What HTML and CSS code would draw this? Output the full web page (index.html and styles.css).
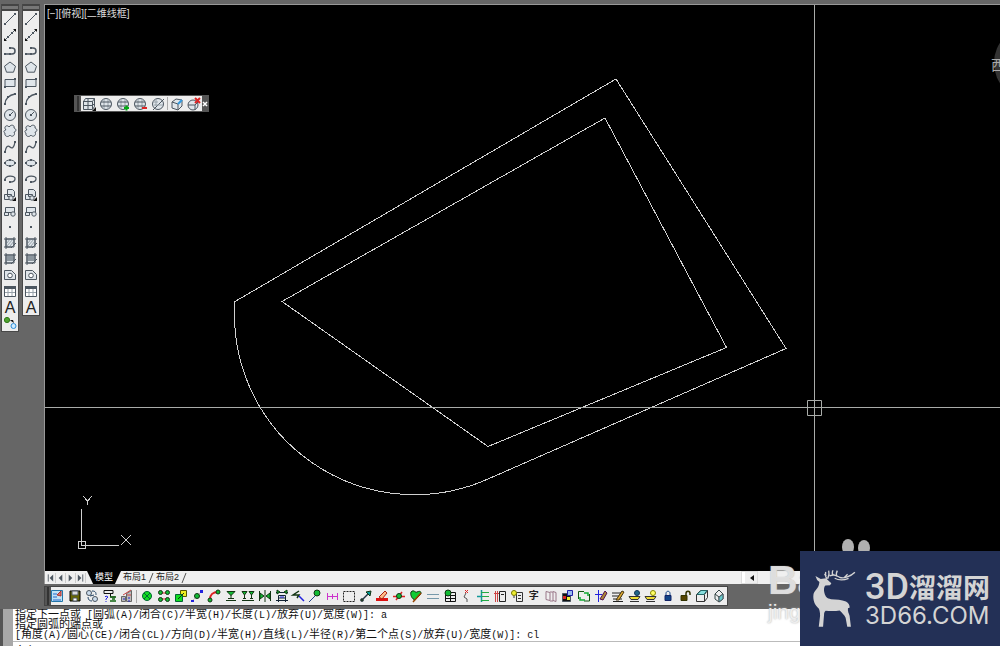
FILE: index.html
```html
<!DOCTYPE html>
<html lang="zh-CN">
<head>
<meta charset="utf-8">
<title>CAD</title>
<link rel="stylesheet" href="styles.css">
</head>
<body>
<svg class="defs" aria-hidden="true">
  <symbol id="i-line" viewBox="0 0 16 16"><path d="M3 13 13 3"/><path class="dot" d="M2 12h2v2H2zM12 2h2v2h-2z"/></symbol>
  <symbol id="i-xline" viewBox="0 0 16 16"><path d="M3 13 13 3"/><path class="dk" d="M2 14v-3l3 3zM14 2v3l-3-3z"/><path class="dot" d="M5 9h2v2H5zM9 5h2v2H9z"/></symbol>
  <symbol id="i-pline" viewBox="0 0 16 16"><path d="M3 11h5M8 5h2c4 0 4 6 0 6H8" stroke-width="1.500"/><path class="dot" d="M2 10h2v2H2zM7 10h2v2H7zM7 4h2v2H7z"/></symbol>
  <symbol id="i-polygon" viewBox="0 0 16 16"><path class="lt" d="M8 3l5.500 4.200-2 6h-7l-2-6z"/></symbol>
  <symbol id="i-rect" viewBox="0 0 16 16"><path class="lt" d="M3 4.500h10v7H3z"/><path class="dot" d="M2 11h2v2H2zM12 3h2v2h-2z"/></symbol>
  <symbol id="i-arc" viewBox="0 0 16 16"><path d="M3 13c0-5 4-9 10-10" stroke-width="1.300"/><path class="dot" d="M2 12h2v2H2zM5 5h2v2H5zM12 2h2v2h-2z"/></symbol>
  <symbol id="i-circle" viewBox="0 0 16 16"><circle class="lt" cx="8" cy="8" r="5.500"/><path d="M8 8l3-3"/><path class="dot" d="M7 7h2v2H7z"/></symbol>
  <symbol id="i-cloud" viewBox="0 0 16 16"><path class="lt" d="M4 7C1 4 5 1 7 4c2-3 6-2 5 1 3 1 2 4 0 4 2 3-2 6-4 3-2 3-6 1-5-2-2-1-1-3 1-3z"/></symbol>
  <symbol id="i-spline" viewBox="0 0 16 16"><path d="M3 13c1-6 3-7 5-5s4 1 5-5" stroke-width="1.300"/><path class="dot" d="M2 12h2v2H2zM12 2h2v2h-2z"/></symbol>
  <symbol id="i-ellipse" viewBox="0 0 16 16"><ellipse class="lt" cx="8" cy="8" rx="5" ry="3"/><path class="dot" d="M2 7h2v2H2zM12 7h2v2h-2zM7 4h2v2H7zM7 10h2v2H7z"/></symbol>
  <symbol id="i-earc" viewBox="0 0 16 16"><path d="M3 9c-1-5 11-5 10-1 0 2-2 3-5 3" stroke-width="1.300"/><path class="dot" d="M2 8h2v2H2zM7 10h2v2H7z"/></symbol>
  <symbol id="i-insert" viewBox="0 0 16 16"><path class="lt" d="M5.500 2.500h5l2 2v5h-7zM2.500 7.500h7v5h-7z"/><circle class="lt" cx="9" cy="11" r="2.200"/><path class="dk" d="M14 10v4h-4z"/></symbol>
  <symbol id="i-block" viewBox="0 0 16 16"><path class="lt" d="M3.500 4.500h9v5h-9zM2.500 9.500h4v3h-4z"/><circle class="lt" cx="11" cy="11" r="2.200"/></symbol>
  <symbol id="i-point" viewBox="0 0 16 16"><path class="dot" d="M7 7h2v2H7z"/></symbol>
  <symbol id="i-hatch" viewBox="0 0 16 16"><path class="lt" d="M4 4h8v8H4z"/><path class="thin" d="M5 8l3-4M5 11l6-7M8 11l4-5"/><path d="M4 2v12M2 4h12M12 2v8M2 12h8M9 13l5-5"/></symbol>
  <symbol id="i-grad" viewBox="0 0 16 16"><path class="lt" d="M4 4h8v8H4z"/><path class="md" stroke="none" d="M5 5h7v5H5z"/><path d="M4 2v12M2 4h12M12 2v8M2 12h8M9 13l5-5"/></symbol>
  <symbol id="i-region" viewBox="0 0 16 16"><path class="lt" d="M2.500 3.500h7l4 4v5h-11z"/><circle class="wh" cx="8" cy="8.500" r="2.300"/></symbol>
  <symbol id="i-table" viewBox="0 0 16 16"><path class="wh" d="M2.500 3.500h11v10h-11z"/><path class="dot" d="M2 3h12v3H2z"/><path class="thin" d="M6 6v7M10 6v7M3 9.500h10"/></symbol>
  <symbol id="i-add" viewBox="0 0 16 16"><circle cx="5" cy="5" r="2.600" fill="#4fa32f" stroke="#2f7a1a"/><path class="dk" d="M8 5h3l1 3-3-2z"/><circle cx="11.500" cy="11" r="2.500" fill="#cfeaff" stroke="#2b8fd8"/></symbol>
</svg>

<main class="app">
  <aside class="docks">
    <div class="palette" role="toolbar" aria-label="绘图">
      <span class="grip"></span>
      <button aria-label="直线"><svg><use href="#i-line"/></svg></button>
      <button aria-label="构造线"><svg><use href="#i-xline"/></svg></button>
      <button aria-label="多段线"><svg><use href="#i-pline"/></svg></button>
      <button aria-label="多边形"><svg><use href="#i-polygon"/></svg></button>
      <button aria-label="矩形"><svg><use href="#i-rect"/></svg></button>
      <button aria-label="圆弧"><svg><use href="#i-arc"/></svg></button>
      <button aria-label="圆"><svg><use href="#i-circle"/></svg></button>
      <button aria-label="修订云线"><svg><use href="#i-cloud"/></svg></button>
      <button aria-label="样条曲线"><svg><use href="#i-spline"/></svg></button>
      <button aria-label="椭圆"><svg><use href="#i-ellipse"/></svg></button>
      <button aria-label="椭圆弧"><svg><use href="#i-earc"/></svg></button>
      <button aria-label="插入块"><svg><use href="#i-insert"/></svg></button>
      <button aria-label="创建块"><svg><use href="#i-block"/></svg></button>
      <button aria-label="点"><svg><use href="#i-point"/></svg></button>
      <button aria-label="图案填充"><svg><use href="#i-hatch"/></svg></button>
      <button aria-label="渐变色"><svg><use href="#i-grad"/></svg></button>
      <button aria-label="面域"><svg><use href="#i-region"/></svg></button>
      <button aria-label="表格"><svg><use href="#i-table"/></svg></button>
      <button class="letter">A</button>
      <button aria-label="添加选定对象"><svg><use href="#i-add"/></svg></button>
    </div>
    <div class="palette" role="toolbar" aria-label="绘图 2">
      <span class="grip"></span>
      <button aria-label="直线"><svg><use href="#i-line"/></svg></button>
      <button aria-label="构造线"><svg><use href="#i-xline"/></svg></button>
      <button aria-label="多段线"><svg><use href="#i-pline"/></svg></button>
      <button aria-label="多边形"><svg><use href="#i-polygon"/></svg></button>
      <button aria-label="矩形"><svg><use href="#i-rect"/></svg></button>
      <button aria-label="圆弧"><svg><use href="#i-arc"/></svg></button>
      <button aria-label="圆"><svg><use href="#i-circle"/></svg></button>
      <button aria-label="修订云线"><svg><use href="#i-cloud"/></svg></button>
      <button aria-label="样条曲线"><svg><use href="#i-spline"/></svg></button>
      <button aria-label="椭圆"><svg><use href="#i-ellipse"/></svg></button>
      <button aria-label="椭圆弧"><svg><use href="#i-earc"/></svg></button>
      <button aria-label="插入块"><svg><use href="#i-insert"/></svg></button>
      <button aria-label="创建块"><svg><use href="#i-block"/></svg></button>
      <button aria-label="点"><svg><use href="#i-point"/></svg></button>
      <button aria-label="图案填充"><svg><use href="#i-hatch"/></svg></button>
      <button aria-label="渐变色"><svg><use href="#i-grad"/></svg></button>
      <button aria-label="面域"><svg><use href="#i-region"/></svg></button>
      <button aria-label="表格"><svg><use href="#i-table"/></svg></button>
      <button class="letter">A</button>
    </div>
  </aside>

  <section class="work">
    <div class="canvas">
      <svg class="drawing" viewBox="45 5 955 566" preserveAspectRatio="xMinYMin slice" aria-hidden="true">
        <g class="shape">
          <path d="M235 301.500 616 79 786 348.500 488 479A180 180 0 0 1 235 301.500z"/>
          <path d="M282 301.500 605 118 726.500 347.500 488 446.500z"/>
        </g>
        <g class="ucs">
          <path d="M81.500 509v36h37M78.500 541.500h7v7h-7z"/>
          <path d="M83 496l4.500 5 4.500-5M87.500 501v4M121 535l10 10M131 535l-10 10"/>
        </g>
        <path class="cross" d="M814.500 5v566M45 407.500h955"/>
        <path class="cross" d="M807.500 400.500h14v15h-14z"/>
        <circle cx="1031" cy="63" r="37" fill="#333" stroke="none"/>
      </svg>
      <span class="view-label">[−][俯视][二维线框]</span>
      <span class="compass">西</span>

      <div class="floatbar" role="toolbar" aria-label="视觉样式">
        <span class="vgrip"></span>
        <div class="float-icons">
          <button aria-label="二维线框"><svg viewBox="0 0 16 16"><path class="lt" d="M2.500 5.500l2-3h9v8l-2 3h-9z"/><path d="M2 5.500h9.500V13M11.500 5.500l2-3M7 3v10M2 9.500h9l3-2"/><path class="dk" d="M15 11v4h-4z"/></svg></button>
          <button aria-label="三维隐藏"><svg viewBox="0 0 16 16"><circle class="lt" cx="8" cy="8" r="5.500"/><path class="thin" d="M6 3v10M10 3v10"/><path d="M3 6h10M3 10h10"/></svg></button>
          <button aria-label="三维线框"><svg viewBox="0 0 16 16"><circle class="lt" cx="8" cy="8" r="5.500"/><path class="thin" d="M6 3v10M10 3v10"/><path d="M3 6h10M3 10h10"/><path d="M9 12h5M11.500 9.500v5" stroke="#0a1" stroke-width="2"/></svg></button>
          <button aria-label="概念"><svg viewBox="0 0 16 16"><circle class="lt" cx="8" cy="8" r="5.500"/><path class="thin" d="M6 3v10M10 3v10"/><path d="M3 6h10M3 10h10"/><path d="M10 12h5" stroke="#d22" stroke-width="2"/></svg></button>
          <button aria-label="真实"><svg viewBox="0 0 16 16"><circle class="lt" cx="8" cy="8" r="5.500"/><path d="M3 14 14 3"/><path class="thin" d="M6 3v7M4 9h9M3 6h5"/></svg></button>
          <span class="sep"></span>
          <button aria-label="编辑"><svg viewBox="0 0 16 16"><path class="lt" d="M3 6l4-3 6 1v6l-4 4-6-2z"/><path d="M3 6l6 2v6"/><path d="M9 8l4-4" stroke="#39d" stroke-width="2"/></svg></button>
          <button aria-label="删除"><svg viewBox="0 0 16 16"><circle class="lt" cx="7" cy="9" r="5"/><path d="M2 9h7v5M9 9l3-3"/><path d="M9 2l5 5M14 2l-5 5" stroke="#d22" stroke-width="2"/></svg></button>
        </div>
        <button class="close" aria-label="关闭"><svg viewBox="0 0 6 6"><path d="M1 1l4 4M5 1l-4 4" stroke="#fff" stroke-width="1.500"/></svg></button>
      </div>
    </div>

    <nav class="tabs" aria-label="布局">
      <button class="step" aria-label="第一个"><svg viewBox="0 0 10 10"><path d="M2.500 1v8"/><path class="dot" d="M8 1v8L4 5z"/></svg></button>
      <button class="step" aria-label="上一个"><svg viewBox="0 0 10 10"><path class="dot" d="M7 1v8L3 5z"/></svg></button>
      <button class="step" aria-label="下一个"><svg viewBox="0 0 10 10"><path class="dot" d="M3 1v8l4-4z"/></svg></button>
      <button class="step" aria-label="最后一个"><svg viewBox="0 0 10 10"><path d="M7.500 1v8"/><path class="dot" d="M2 1v8l4-4z"/></svg></button>
      <button class="tab active">模型</button>
      <button class="tab">布局1</button>
      <svg class="slash" viewBox="0 0 6 12"><path d="M1 11 5 1"/></svg>
      <button class="tab">布局2</button>
      <svg class="slash" viewBox="0 0 6 12"><path d="M1 11 5 1"/></svg>
      <button class="scroll" aria-label="向左滚动"><svg viewBox="0 0 10 10"><path class="dk" d="M7 2v6L3 5z"/></svg></button>
    </nav>

    <div class="strip">
      <div class="bar" role="toolbar" aria-label="工具">
        <span class="vgrip"></span>
        <div class="group first">
          <button aria-label="图像"><svg viewBox="0 0 16 16"><path d="M2.500 2.500h11v11h-11z" fill="#bfe3f5" stroke="#27a"/><path d="M4 6h4M4 9h4M4 12h8" stroke="#26c"/><path d="M8 7l4-4v5z" fill="#d76" stroke="#a33"/></svg></button>
          <button aria-label="保存"><svg viewBox="0 0 16 16"><path d="M3 3h10v10H3z" fill="#660" stroke="#000"/><path d="M5 3h6v4H5z" fill="#ddd"/><path d="M6 10h4v3H6z" fill="#fff"/></svg></button>
          <button aria-label="链接"><svg viewBox="0 0 16 16"><circle cx="5" cy="5" r="2.500" fill="#cde"/><circle cx="11" cy="11" r="2.500" fill="#cde"/><path d="M8 3c4 0 4 2 4 4M4 9c0 3 2 4 4 4M6 8l4-1" stroke="#246"/></svg></button>
          <button aria-label="查询"><svg viewBox="0 0 16 16"><path d="M2 2.500h9v3H2zM8.500 6v3h5" stroke="#111"/><path d="M3 9l1-1 2 1-2 2v1M4 13v1" stroke="#22d"/><path d="M8 9h6M8 13h6M10 11h3" stroke="#161" stroke-width="1.500"/></svg></button>
          <button aria-label="楼层"><svg viewBox="0 0 16 16"><path d="M2.500 8.500h4v5h-4zM7.500 5.500l5-3v11h-5z" fill="#bbb" stroke="#666"/><path d="M4 7l8-5M8 7h4" stroke="#c44"/><path d="M4 11h2M9 10h2M9 13h2" stroke="#22c"/></svg></button>
        </div>
        <span class="sep"></span>
        <div class="group">
          <button aria-label="节点"><svg viewBox="0 0 16 16"><circle cx="8" cy="8" r="4.500" fill="#1d2" stroke="#063"/><path d="M5 5l6 6M11 5l-6 6" stroke="#063"/></svg></button>
          <button aria-label="阵列"><svg viewBox="0 0 16 16"><path d="M5 5h6M5 11h6" stroke="#d22"/><g fill="#1b3" stroke="#131"><circle cx="4.500" cy="4.500" r="2"/><circle cx="11.500" cy="4.500" r="2"/><circle cx="4.500" cy="11.500" r="2"/><circle cx="11.500" cy="11.500" r="2"/></g></svg></button>
          <button aria-label="缩放"><svg viewBox="0 0 16 16"><path d="M7.500 2.500h6v6h-6z" fill="#ee2" stroke="#550"/><path d="M2.500 6.500h7v7h-7z" fill="#1d2" stroke="#063"/><path d="M5 11l6-6" stroke="#131"/></svg></button>
          <button aria-label="连接点"><svg viewBox="0 0 16 16"><path d="M3 13 13 3" stroke="#bbb"/><circle cx="8" cy="8" r="2.500" fill="#1b3" stroke="#131"/><path d="M2 12h3v2H2zM11 2h3v3h-3z" fill="#22d" stroke="none"/></svg></button>
          <button aria-label="弧线"><svg viewBox="0 0 16 16"><path d="M4 11c0-4 3-7 8-7" stroke="#d22" stroke-width="2"/><circle cx="4" cy="12" r="2" fill="#1b3" stroke="#131"/><circle cx="12" cy="4" r="2" fill="#1b3" stroke="#131"/></svg></button>
          <button aria-label="下对齐"><svg viewBox="0 0 16 16"><path d="M4 3.500h8l-4 4z" fill="#1b3" stroke="#131"/><path d="M8 7v4M3 12.500h10M5 10.500h6" stroke="#131"/></svg></button>
          <button aria-label="双对齐"><svg viewBox="0 0 16 16"><path d="M2 3.500h5L4.500 7zM9 3.500h5L11.500 7z" fill="#1b3" stroke="#131"/><path d="M4.500 7v4M11.500 7v4M3 10.500h3M10 10.500h3M2 12.500h12" stroke="#131"/></svg></button>
          <button aria-label="镜像"><svg viewBox="0 0 16 16"><path d="M8 2v12M2.500 3v10M13.500 3v10" stroke="#131"/><path d="M3 5l4 3-4 3zM13 5l-4 3 4 3z" fill="#1b3" stroke="#131"/></svg></button>
          <button aria-label="标高"><svg viewBox="0 0 16 16"><path d="M2 4.500h12M2 12.500h12M4.500 14V7.500h7V14M4 10h8" stroke="#123"/><path d="M3 2l3 2-3 2zM13 2l-3 2 3 2z" fill="#1b3" stroke="#131"/><path d="M6 9h4" stroke="#22d"/></svg></button>
          <button aria-label="折线"><svg viewBox="0 0 16 16"><path d="M9 3 3 7h6l-2 3" stroke="#131" stroke-width="1.500"/><path d="M9 8l5 5" stroke="#22d" stroke-width="1.500"/></svg></button>
          <button aria-label="标记"><svg viewBox="0 0 16 16"><path d="M2 14l7-7" stroke="#248"/><circle cx="10" cy="5" r="3" fill="#1b3" stroke="#131"/></svg></button>
          <button aria-label="间距"><svg viewBox="0 0 16 16"><path d="M3 8.500h10M3.500 5v7M8.500 6v5M13.500 5v7" stroke="#c3c"/></svg></button>
          <button aria-label="选框"><svg viewBox="0 0 16 16"><path d="M2.500 3.500h11v10h-11z" stroke="#222" stroke-dasharray="2 1"/></svg></button>
          <button aria-label="引线"><svg viewBox="0 0 16 16"><path d="M4 12l7-7" stroke="#234" stroke-width="1.500"/><path d="M8 4l5-1-1 5z" fill="#099" stroke="#131"/><circle cx="4" cy="12" r="1.500" fill="#131"/></svg></button>
          <button aria-label="涂改"><svg viewBox="0 0 16 16"><path d="M2 13h12v-3H2z" fill="#d11" stroke="none"/><path d="M5 9l6-6 2 2-5 6z" fill="#fb8" stroke="#a21"/></svg></button>
          <button aria-label="打断"><svg viewBox="0 0 16 16"><path d="M2 8.500h12M5 12l6-8" stroke="#d22" stroke-width="1.500"/><circle cx="8" cy="8" r="2.500" fill="#1b3" stroke="#131"/></svg></button>
          <button aria-label="画笔"><svg viewBox="0 0 16 16"><path d="M3 4c3-3 4 1 6 0 4-2 5 1 3 3l-5 5c-3-1-5-5-4-8z" fill="#1c3" stroke="#131"/><path d="M5 14l8-9" stroke="#940" stroke-width="1.500"/></svg></button>
          <button aria-label="平行线"><svg viewBox="0 0 16 16"><path d="M2 6.500h12M2 10.500h12" stroke="#79a"/></svg></button>
          <button aria-label="表单"><svg viewBox="0 0 16 16"><path d="M3.500 4.500h10v9h-10zM4 7.500h9M4 10.500h9M8.500 5v8" fill="#eee" stroke="#111"/><circle cx="6" cy="5" r="3" fill="#1b3" stroke="#131"/></svg></button>
          <button aria-label="折断"><svg viewBox="0 0 16 16"><path d="M9 14v-3L6 9l2-4" stroke="#555"/><path d="M7 2l3 3M10 2 7 5" stroke="#d22"/></svg></button>
          <button aria-label="分支"><svg viewBox="0 0 16 16"><path d="M6.500 2v12M2 8.500h5" stroke="#199" stroke-width="1.500"/><path d="M6 4.500h8M7 8.500h7M6 12.500h8" stroke="#2a4"/></svg></button>
          <button aria-label="门窗"><svg viewBox="0 0 16 16"><path d="M3.500 3v11M5.500 3v11M2 5.500h5" stroke="#c44"/><path d="M7.500 3.500h6v10h-6zM9 6.500h3" stroke="#222"/></svg></button>
          <button aria-label="灯组"><svg viewBox="0 0 16 16"><path d="M7.500 4.500h6v9h-6zM9 7.500h3M9 10.500h3" stroke="#333"/><circle cx="5" cy="5" r="2.500" fill="#ee3" stroke="#770"/><path d="M4 9h2" stroke="#333"/></svg></button>
          <button class="word">字</button>
          <button aria-label="图册"><svg viewBox="0 0 16 16"><path d="M3 3.500l4 1v8l-4-1zM7 4h3v9H7M10 3.500l3 1v9l-3-1" fill="#eee" stroke="#978"/></svg></button>
          <button aria-label="颜色"><svg viewBox="0 0 16 16"><path d="M3.500 5.500h8v8h-8z" fill="#111"/><path d="M8.500 2.500h5v5h-5z" fill="#9be" stroke="#22a"/><path d="M4 8h3v3H4z" fill="#d22" stroke="none"/><path d="M8 9h3v3H8z" fill="#ee3" stroke="none"/></svg></button>
          <button aria-label="替换"><svg viewBox="0 0 16 16"><path d="M2.500 11V3.500H8M13.500 6v7H8" stroke="#151"/><path d="M8 5h4v3M4 9v3h5" stroke="#1a3" stroke-width="1.500"/></svg></button>
          <button aria-label="刷子"><svg viewBox="0 0 16 16"><path d="M5.500 2v12M2 6.500h7" stroke="#22d"/><path d="M7 11l5-8 2 2-4 7z" fill="#a83" stroke="#515"/></svg></button>
          <button aria-label="编辑图层"><svg viewBox="0 0 16 16"><path d="M2 5h9M2 8h10M3 11h9M3 13.500h10" stroke="#222"/><path d="M6 12l6-9 2 1-5 8z" fill="#da3" stroke="#431"/></svg></button>
          <button aria-label="冻结图层"><svg viewBox="0 0 16 16"><path d="M2 8.500h11l-2 3H4zM3 13.500h9" fill="#ed3" stroke="#333"/><circle cx="10" cy="5" r="2.500" fill="#268" stroke="#135"/></svg></button>
          <button aria-label="打开图层"><svg viewBox="0 0 16 16"><path d="M2 8.500h11l-2 3H4zM3 13.500h9" fill="#ed3" stroke="#333"/><circle cx="10" cy="5" r="2.500" fill="#ff6" stroke="#880"/></svg></button>
          <button aria-label="锁定"><svg viewBox="0 0 16 16"><path d="M6 8V5.500c0-3 4-3 4 0V8" stroke="#148"/><path d="M5 7.500h6v5H5z" fill="#148" stroke="#126"/></svg></button>
          <button aria-label="解锁"><svg viewBox="0 0 16 16"><path d="M9 8V5.500c0-3 4-3 4 0V7" stroke="#330" stroke-width="1.500"/><path d="M4 7.500h6v5H4z" fill="#540" stroke="#330"/></svg></button>
          <button aria-label="立方体"><svg viewBox="0 0 16 16"><path d="M2.500 6.500l4-4h7l-3 4v7h-8zM10.500 13.500l3-4v-7" fill="#eee" stroke="#333"/><path d="M3 6.500l4-4h6l-3 4z" fill="#8dd" stroke="#266"/></svg></button>
          <button aria-label="等轴测"><svg viewBox="0 0 16 16"><path d="M8 2l4 4v5l-4 3-4-3V6zM4 6l4 3 4-3M8 9v5" fill="#eee" stroke="#344"/><path d="M8 9l4-3v5l-4 3z" fill="#6cc"/></svg></button>
        </div>
      </div>
    </div>
  </section>

  <footer class="command">
    <span class="cmd-grip"></span>
    <div class="cmd-body">
      <p><b>指定下一点或</b> [<b>圆弧</b>(A)/<b>闭合</b>(C)/<b>半宽</b>(H)/<b>长度</b>(L)/<b>放弃</b>(U)/<b>宽度</b>(W)]: a</p>
      <p><b>指定圆弧的端点或</b></p>
      <p>[<b>角度</b>(A)/<b>圆心</b>(CE)/<b>闭合</b>(CL)/<b>方向</b>(D)/<b>半宽</b>(H)/<b>直线</b>(L)/<b>半径</b>(R)/<b>第二个点</b>(S)/<b>放弃</b>(U)/<b>宽度</b>(W)]: cl</p>
      <input class="prompt" aria-label="命令行" value="命令:">
    </div>
  </footer>
</main>

<div class="watermark" aria-hidden="true">
  <svg class="paw" viewBox="0 0 30 20"><ellipse cx="7" cy="9" rx="6" ry="8"/><ellipse cx="23" cy="10" rx="6" ry="8"/></svg>
  <span class="wm-big">Bai</span>
  <span class="wm-small">jingyan</span>
</div>

<div class="brand">
  <svg class="deer" viewBox="245 117 135 178" aria-hidden="true">
    <path d="M255 138l16 9 16-2 6 6 10 9-4 6-14 1c-5 4-5 14-3 22 3 12 8 18 20 19 16 1 32 1 45 7 8 4 12 12 11 18-1 3-4 0-5 3-1 9 3 15 5 22l4 33h-11l-5-27c-3-8-12-16-18-22-14 3-30 2-42 1-4 3-5 7-5 11l-3 37h-13l4-33c0-8-1-16-4-22-13-10-18-26-16-42 2-14 16-16 18-38l-7-6c-2-4-3-8-5-12z"/>
    <path class="horn" d="M290 147c-6-8-6-14-4-21M288 138l-6-5M292 146c4-8 6-14 3-24M298 138c14-6 16-2 30 4 12 5 34-3 46-15M310 136c-6-4-5-9-2-15M320 139c-4-6-2-11 1-17M313 145c12 6 28 6 42 0M340 145l12-12"/>
  </svg>
  <div class="brand-text">
    <div class="brand-name"><span>3D</span>溜溜网</div>
    <div class="brand-url">3D66.COM</div>
  </div>
</div>
</body>
</html>
```
FILE: styles.css
```css
* { box-sizing: border-box; }

body {
  margin: 0;
  height: 100vh;
  overflow: hidden;
  background: #666;
  font-family: "Liberation Sans", "Noto Sans CJK SC", sans-serif;
}

button {
  display: block;
  padding: 0;
  border: 0;
  background: none;
  color: #222;
  font-family: inherit;
}

svg { display: block; fill: none; stroke: #4c5660; }

.defs { position: absolute; width: 0; height: 0; }
.dot { fill: #4c5660; stroke: none; }
.dk { fill: #111; stroke: none; }
.lt { fill: #dfe5ea; }
.md { fill: #8d979f; }
.wh { fill: #fff; }
.thin { stroke: #98a2aa; }

.app {
  display: grid;
  grid-template: minmax(0, 1fr) 37px / 44px minmax(0, 1fr);
  height: 100%;
}

/* docked palettes */
.docks {
  display: flex;
  align-items: flex-start;
  gap: 3px;
  padding: 4px 1px;
}

.palette {
  flex: none;
  width: 18px;
  border: 1px solid #484848;
  border-top: 0;
  background: #ededed;
}

.palette .grip {
  display: block;
  height: 7px;
  border-block: 2px solid #444;
  background: #777;
}

.palette button { width: 16px; height: 16px; }
.palette svg { width: 16px; height: 16px; }
.palette .letter { font-size: 16px; line-height: 17px; }

/* drawing area */
.work {
  display: grid;
  grid-template-rows: minmax(0, 1fr) 13px 25px;
  padding-top: 4px;
}

.canvas {
  position: relative;
  overflow: hidden;
  border-top: 1px solid #999;
  border-left: 1px solid #999;
  background: #000;
}

.drawing { width: 100%; height: 100%; }
.shape, .ucs { stroke: #d0d0d0; shape-rendering: crispEdges; }
.cross { stroke: #a9aca9; }

.view-label {
  position: absolute;
  top: 3px;
  left: 2px;
  color: #ddd;
  font-size: 10px;
  line-height: 12px;
}

.compass {
  position: absolute;
  top: 50px;
  right: -5px;
  color: #aaa;
  font-size: 14px;
  line-height: 20px;
}

.floatbar {
  position: absolute;
  top: 90px;
  left: 29px;
  display: flex;
  width: 135px;
  height: 17px;
  border: 1px solid #555;
  background: #555;
}

.vgrip {
  flex: none;
  width: 6px;
  border-inline: 2px solid #555;
  background: #333;
}

.float-icons {
  display: flex;
  flex: 1;
  align-items: center;
  justify-content: space-between;
  background: #ededed;
}

.float-icons button, .float-icons svg { width: 16px; height: 16px; }
.close { width: 6px; }
.close svg { width: 6px; height: 6px; }
.sep { width: 1px; height: 13px; background: #aaa; }

/* layout tabs */
.tabs {
  display: flex;
  align-items: center;
  border-left: 1px solid #999;
  background: #f0f0f0;
}

.step { width: 10px; border-right: 1px solid #ccc; }
.step svg { width: 9px; height: 10px; }
.step:first-child { margin-left: 1px; }

.tab {
  padding: 0 2px;
  font-size: 9px;
  line-height: 13px;
}

.tab.active {
  width: 34px;
  margin-left: 1px;
  padding: 0;
  background: #000;
  color: #fff;
  clip-path: polygon(0 0, 100% 0, 82% 100%, 18% 100%);
}

.slash { width: 6px; height: 12px; stroke: #555; }

.scroll {
  display: flex;
  align-items: center;
  justify-content: flex-end;
  width: 15px;
  height: 11px;
  margin-right: 243px;
  margin-left: auto;
  border-left: 3px solid #fff;
  outline: 1px solid #ddd;
  background: #eee;
}

.scroll svg { width: 10px; height: 10px; }

/* lower toolbar */
.strip { padding-top: 2px; background: #666; }

.bar {
  display: flex;
  align-items: center;
  width: 684px;
  height: 20px;
  border: 1px solid #444;
  background: #ededed;
}

.bar .vgrip { height: 18px; margin-right: -1px; }
.bar svg { width: 16px; height: 16px; margin: -1px; }

.group {
  display: flex;
  flex: 1;
  justify-content: space-between;
}

.group button { width: 14px; height: 14px; }
.group.first { flex: 0 0 84px; }
.bar .sep { margin-inline: 2px; }
.group:last-child { padding-inline: 1px; }
.word { font-size: 10px; font-weight: bold; line-height: 14px; }

/* command window */
.command {
  display: flex;
  grid-column: 1 / -1;
  min-height: 0;
  overflow: hidden;
  background: #fff;
}

.cmd-grip {
  flex: none;
  width: 13px;
  border-left: 3px solid #555;
  background: #a8a8a8;
}

.cmd-body {
  flex: 1;
  padding-top: 2px;
  color: #111;
  font-family: "Liberation Mono", "Noto Sans CJK SC", monospace;
  font-size: 10px;
}

.cmd-body p {
  height: 10px;
  margin: 0;
  padding-left: 2px;
  line-height: 10px;
  white-space: nowrap;
}

.cmd-body b { font-size: 11px; font-weight: normal; line-height: 0; }

.prompt {
  display: block;
  width: 100%;
  height: 16px;
  padding: 0 2px;
  border: 0;
  border-top: 1px solid #bbb;
  background: #fff;
  color: #111;
  font: inherit;
}

/* overlaid marks */
.watermark {
  position: absolute;
  right: 100px;
  bottom: 18px;
  width: 132px;
  height: 90px;
  color: rgb(240 240 240 / 75%);
  font-weight: bold;
}

.paw {
  width: 30px;
  height: 20px;
  margin-left: 73px;
  fill: #b0b0b0;
  stroke: none;
}

.wm-big {
  display: block;
  font-size: 41px;
  line-height: 44px;
  text-shadow: 0 0 1px #aaa;
}

.wm-small {
  display: block;
  color: #eee;
  font-size: 21px;
  font-weight: normal;
  line-height: 20px;
  text-shadow: 0 0 2px #aaa;
}

.brand {
  position: absolute;
  right: 0;
  bottom: 0;
  display: flex;
  align-items: center;
  gap: 8px;
  width: 200px;
  height: 95px;
  padding-left: 12px;
  background: #233056;
  color: #d4d4d4;
}

.deer {
  flex: none;
  width: 45px;
  height: 59px;
  fill: #d4d4d4;
  stroke: none;
}

.horn { fill: none; stroke: #d4d4d4; stroke-width: 4; }

.brand-name {
  display: flex;
  align-items: center;
  height: 34px;
  font-family: "Noto Sans CJK SC", sans-serif;
  font-size: 27px;
  font-weight: 700;
  line-height: 30px;
  white-space: nowrap;
}

.brand-name span { font-family: Roboto, sans-serif; font-size: 36px; font-weight: 500; }

.brand-url {
  height: 24px;
  font-family: Inter, sans-serif;
  font-size: 24px;
  line-height: 24px;
}
```
